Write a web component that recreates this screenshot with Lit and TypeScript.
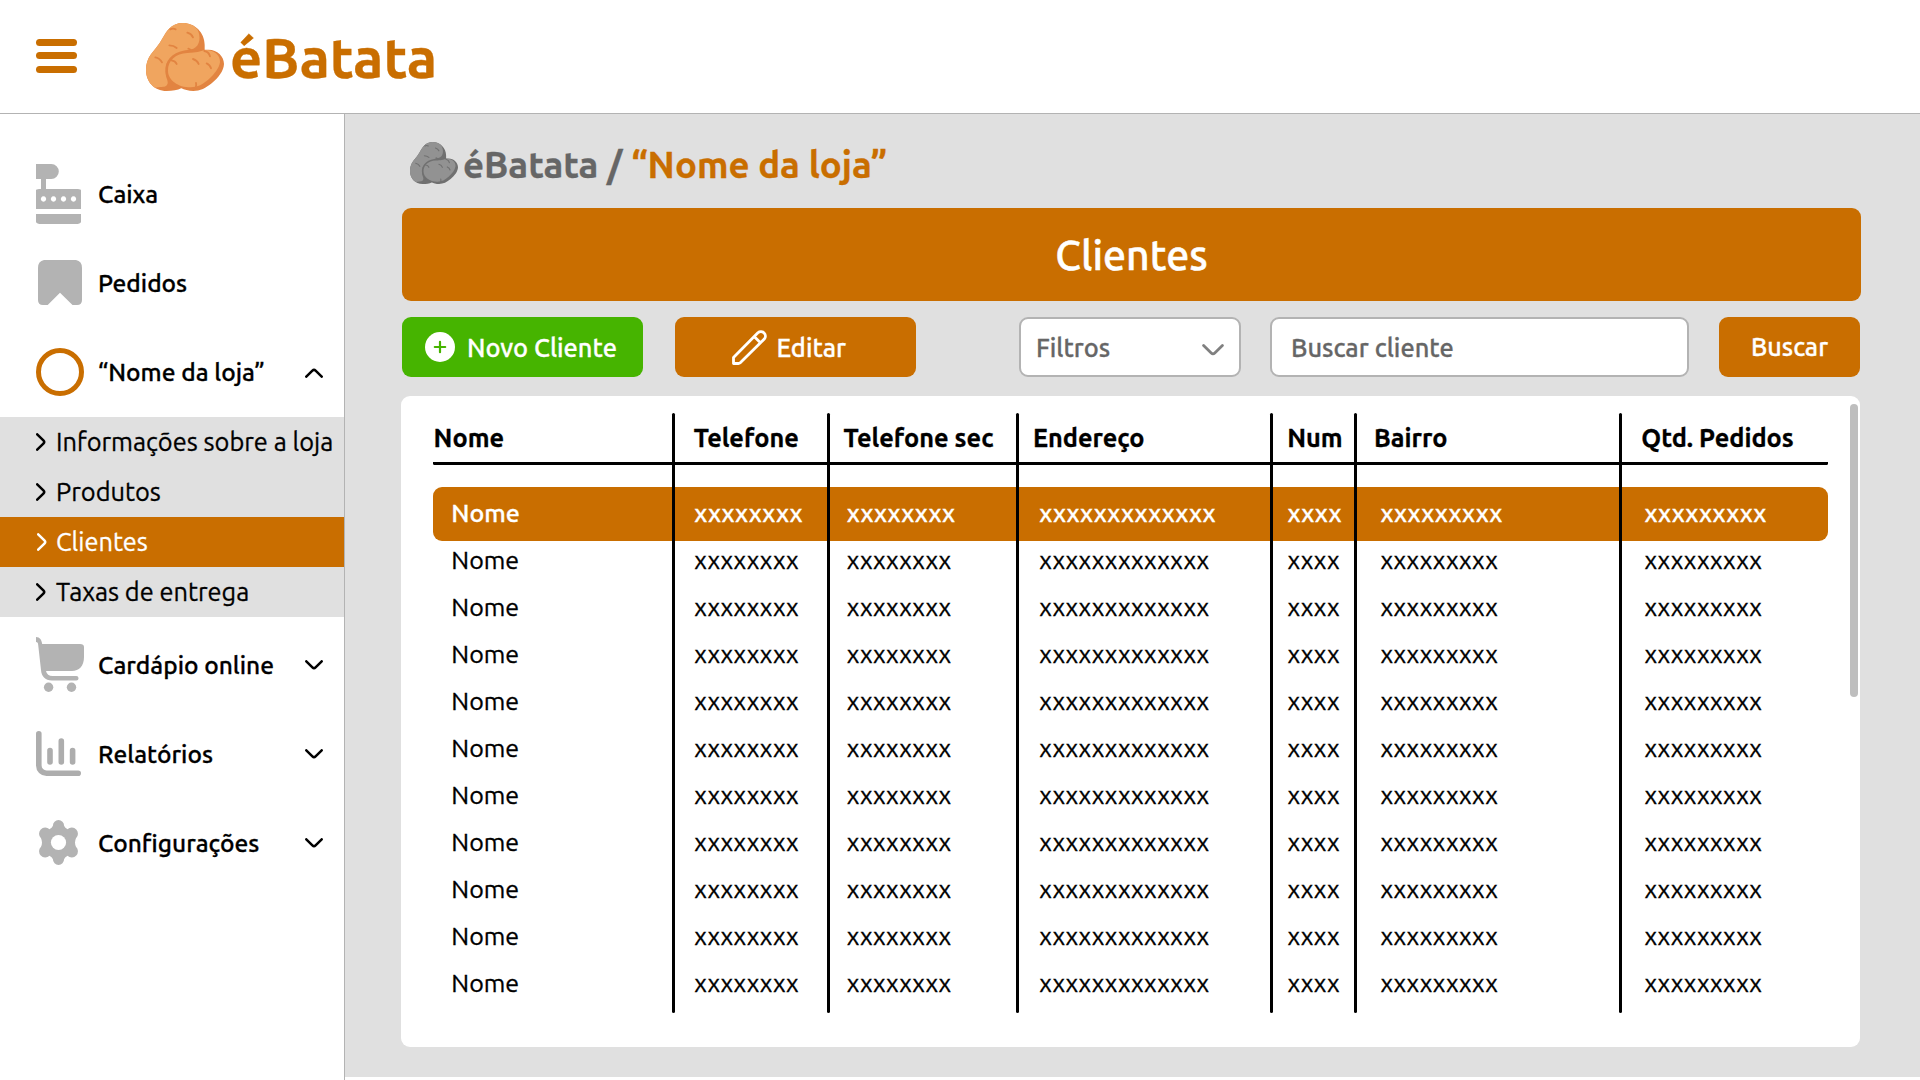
import { LitElement, html, css } from "lit";
import { classMap } from "lit/directives/class-map.js";

const potato = html`<svg viewBox="438 69 234 204" preserveAspectRatio="none">
  <path class="dark" d="M548 69C585 69 614 98 614 135V152L545 264C532 271 518 273 500 273C462 273 438 245 438 210C438 172 460 156 474 136C489 115 494 100 507 86C518 75 532 69 548 69Z"/>
  <path class="light" d="M548 69C567 69 583 76 592 88C603 108 601 138 580 146L560 152L500 190L497 222C499 238 509 249 499 257C493 262 478 260 466 263C449 253 438 233 438 210C438 172 460 156 474 136C489 115 494 100 507 86C518 75 532 69 548 69Z"/>
  <path class="dark" d="M626 149C652 149 672 169 672 192C671 214 654 234 636 249C618 264 600 273 580 273C565 273 553 269 543 264C515 255 500 240 496 215C494 187 512 158 556 151C588 146 600 150 626 149Z"/>
  <path class="light" d="M614 150C642 149 661 164 660 187C657 205 644 222 626 238C609 253 593 262 572 262C534 262 504 240 504 212C503 182 528 160 562 159C590 158 600 155 614 150Z"/>
  <g class="marks"><path d="M511 88Q519 84 527 88M562 98Q574 101 579 112M508 136Q521 136 530 144M466 172Q480 175 486 187M565 146Q572 148 576 154M514 181Q526 182 530 192M579 177Q592 181 596 192M613 153Q627 156 630 169M620 190Q630 194 633 205M588 249Q590 256 587 263"/></g>
</svg>`;

const chevron = html`<svg class="chev" width="18" height="10" viewBox="0 0 18 10"><path d="M1.3 1.3L7.4 7.4Q9 9 10.6 7.4L16.7 1.3" fill="none" stroke="currentColor" stroke-width="2.5" stroke-linecap="round"/></svg>`;
const arrow = html`<svg class="arrow" width="10" height="18" viewBox="0 0 10 18"><path d="M1.2 1.3L7.4 7.4Q9 9 7.4 10.6L1.2 16.7" fill="none" stroke="currentColor" stroke-width="2.5" stroke-linecap="round"/></svg>`;

const icons = {
  caixa: html`<svg width="45" height="60" viewBox="0 0 45 60"><path fill-rule="evenodd" d="M0 0H15.3a7.5 7.5 0 0 1 0 15H10V25H42Q45 25 45 26.5V45H0V26.5Q0 25 3 25H5V15H0ZM7.5 32.3a2.7 2.7 0 1 0 .01 0ZM17.5 32.3a2.7 2.7 0 1 0 .01 0ZM27.5 32.3a2.7 2.7 0 1 0 .01 0ZM37.5 32.3a2.7 2.7 0 1 0 .01 0ZM0 50H45V58Q44 60 40 60H5Q1 60 0 58Z"/></svg>`,
  pedidos: html`<svg class="inset" width="44" height="45" viewBox="0 0 44 45"><path d="M6 0H38Q44 1 44 8V40Q44 45 39 45H34.5L22 32.7L9.7 45H5Q0 45 0 40V8Q0 1 6 0Z"/></svg>`,
  loja: html`<svg width="48" height="48" viewBox="0 0 48 48"><circle class="ring" cx="24" cy="24" r="21.5"/></svg>`,
  cart: html`<svg width="48" height="55" viewBox="0 0 48 55"><path d="M0 0C4 0 5.6 3 6.2 7H44Q48 7 48 10V20C48 29 43 34 36 34H10C10.6 37 13 39 16.5 39H40.3a2.2 2.2 0 0 1 0 4.5H16C9 43.5 5.4 39 5 33L2.2 8C2 5.8 1.6 5 0 5Z"/><circle cx="12.6" cy="50.3" r="4.7"/><circle cx="35.5" cy="50.3" r="4.7"/></svg>`,
  chart: html`<svg width="45" height="45" viewBox="0 0 45 45"><path class="line" d="M2.8 2.8V34.5a7.7 7.7 0 0 0 7.7 7.7H42.2M14 19.6V31M25.3 10V31M36.6 19.6V31"/></svg>`,
  gear: html`<svg class="inset" width="41" height="45" viewBox="0 0 41 45"><path d="M14.9 5.7a5.6 5.6 0 0 1 11.2 0Q26.5 7.6 29.5 9.2A5.6 5.6 0 1 1 38 18.2Q36 22.5 38 26.8A5.6 5.6 0 1 1 29.5 35.8Q26.5 37.4 26.1 39.3a5.6 5.6 0 0 1-11.2 0Q14.5 37.4 11.5 35.8A5.6 5.6 0 1 1 3 26.8Q5 22.5 3 18.2A5.6 5.6 0 1 1 11.5 9.2Q14.5 7.6 14.9 5.7Z"/><circle cx="20.5" cy="22.5" r="7.6" fill="#fff"/></svg>`,
};

const topItems = [
  { icon: icons.caixa, label: "Caixa" },
  { icon: icons.pedidos, label: "Pedidos" },
  { icon: icons.loja, label: "“Nome da loja”", open: true },
];
const bottomItems = [
  { icon: icons.cart, label: "Cardápio online" },
  { icon: icons.chart, label: "Relatórios" },
  { icon: icons.gear, label: "Configurações" },
];
const subItems = ["Informações sobre a loja", "Produtos", "Clientes", "Taxas de entrega"];
const heads = ["Nome", "Telefone", "Telefone sec", "Endereço", "Num", "Bairro", "Qtd. Pedidos"];
const record = ["Nome", "x".repeat(8), "x".repeat(8), "x".repeat(13), "x".repeat(4), "x".repeat(9), "x".repeat(9)];
const rows = Array.from({ length: 11 }, () => record);

class AppRoot extends LitElement {
  static styles = css`
    :host { display: flex; flex-direction: column; height: 1080px; overflow: hidden; background: #fff; color: #000; font-family: "Ubuntu", "Noto Sans", sans-serif; -webkit-text-stroke: 0.3px currentColor; --orange: #c96e00; --gray: #b3b3b3; --bg: #e0e0e0; }
    * { box-sizing: border-box; }
    svg { display: block; flex: none; }
    header { height: 114px; flex: none; border-bottom: 1px solid var(--gray); display: flex; align-items: center; padding-left: 36px; }
    .burger { display: flex; flex-direction: column; gap: 6.5px; width: 41px; margin: -1.5px 69px 0 0; }
    .burger i { height: 7px; border-radius: 3.5px; background: var(--orange); }
    .brand { display: flex; align-items: center; color: var(--orange); font-size: 56px; font-weight: 700; gap: 6px; --light: #f0a55f; --dark: #e28441; }
    .brand svg { width: 78px; height: 68px; }
    .brand span { line-height: 64px; margin-top: 3px; }
    .light { fill: var(--light); }
    .dark { fill: var(--dark); }
    .marks { fill: none; stroke: var(--dark); stroke-width: 5.5; stroke-linecap: round; }
    .body { flex: 1; display: flex; min-height: 0; }
    nav { width: 345px; flex: none; border-right: 1px solid var(--gray); padding-top: 35px; }
    .item { height: 89px; display: flex; align-items: center; padding: 0 21px 0 36px; font-size: 24.5px; font-weight: 500; }
    .pic { width: 62px; fill: var(--gray); }
    .inset { margin-left: 2px; }
    .ring { fill: none; stroke: var(--orange); stroke-width: 5; }
    .line { fill: none; stroke: #adadad; stroke-width: 5.6; stroke-linecap: round; }
    .item .chev { margin-left: auto; }
    .item.open .chev { transform: rotate(180deg); margin-top: 3px; }
    .sub { background: var(--bg); margin: 1px 0 3px; }
    .sub div { height: 50px; display: flex; align-items: center; padding-left: 36px; gap: 10px; font-size: 25.4px; white-space: nowrap; }
    .sub span { padding-bottom: 1px; }
    .sub .on { background: var(--orange); color: #fff; padding-left: 37px; gap: 9px; }
    main { flex: 1; height: 963px; background: var(--bg); padding: 25px 59px 0 57px; }
    .crumb { display: flex; align-items: center; height: 54px; padding-left: 8px; font-size: 36.6px; font-weight: 700; color: #666; --light: #929292; --dark: #707070; }
    .crumb svg { width: 48px; height: 42px; margin: -6px 5px 0 0; }
    .crumb span { margin-top: -4px; white-space: pre; }
    .crumb .shop { color: var(--orange); padding-left: 0.5px; }
    .banner { height: 93px; margin-top: 15px; border-radius: 9px; background: var(--orange); color: #fff; font-size: 41px; font-weight: 500; display: flex; align-items: center; justify-content: center; -webkit-text-stroke-width: 0.5px; }
    .tools { display: flex; height: 60px; margin: 16px 1px 0 0; font-size: 25.4px; font-weight: 500; color: #fff; }
    .tools > div { display: flex; align-items: center; border-radius: 9px; background: var(--orange); white-space: nowrap; }
    .tools .new { width: 241px; background: #46b400; padding-left: 23px; gap: 12px; margin-right: 32px; }
    .tools .edit { width: 241px; padding-left: 57px; gap: 9.5px; margin-right: 103px; }
    .tools .field { background: #fff; border: 2px solid var(--gray); color: #666; }
    .tools .filter { width: 222px; padding: 0 15px 0 15px; justify-content: space-between; margin-right: 29px; }
    .filter svg { margin-top: 5px; color: #808080; }
    .tools .search { width: 419px; padding-left: 19px; margin-right: 30px; }
    .tools .go { width: 141px; justify-content: center; font-size: 25.2px; }
    .card { position: relative; height: 651px; margin: 19px 1px 0 -1px; border-radius: 9px; background: #fff; padding: 17px 32px; font-size: 25px; }
    .grid { display: grid; grid-template-columns: 239px 155px 189px 254px 84px 265px 209px; white-space: nowrap; }
    .head { height: 52px; border-bottom: 3px solid #000; font-weight: 700; font-size: 25.3px; align-items: center; border-radius: 1.5px; }
    .head span:nth-child(1) { padding-left: 0.6px; }
    .head span:nth-child(2) { padding-left: 21.7px; }
    .head span:nth-child(3) { padding-left: 16.5px; }
    .head span:nth-child(4) { padding-left: 17px; }
    .head span:nth-child(5) { padding-left: 17.2px; }
    .head span:nth-child(6) { padding-left: 20px; }
    .head span:nth-child(7) { padding-left: 22.3px; }
    .rows { padding-top: 24px; }
    .row { height: 47px; align-items: center; }
    .row.sel { height: 54px; margin: -2px 0 -5px; padding-bottom: 2px; border-radius: 9px; background: var(--orange); color: #fff; font-weight: 500; }
    .row span:nth-child(1) { padding-left: 18.3px; }
    .row span:nth-child(2) { padding-left: 22.3px; }
    .row span:nth-child(3) { padding-left: 19.8px; }
    .row span:nth-child(4) { padding-left: 23.3px; }
    .row span:nth-child(5) { padding-left: 17.6px; }
    .row span:nth-child(6) { padding-left: 26.4px; }
    .row span:nth-child(7) { padding-left: 25.5px; }
    .rules { position: absolute; left: 32px; top: 17px; height: 600px; }
    .rules i { width: 3px; border-radius: 1.5px; background: #000; }
    .rules i:first-child { visibility: hidden; }
    .thumb { position: absolute; right: 2px; top: 8px; width: 8px; height: 293px; border-radius: 4px; background: #bebebe; }
  `;

  item(it: { icon: unknown; label: string; open?: boolean }, expandable: boolean) {
    return html`<div class=${classMap({ item: true, open: !!it.open })}>
      <div class="pic">${it.icon}</div><span>${it.label}</span>${expandable ? chevron : ""}
    </div>`;
  }

  render() {
    return html`
      <header>
        <div class="burger"><i></i><i></i><i></i></div>
        <div class="brand">${potato}<span>éBatata</span></div>
      </header>
      <div class="body">
        <nav>
          ${topItems.map((it) => this.item(it, !!it.open))}
          <div class="sub">
            ${subItems.map((s) => html`<div class=${classMap({ on: s === "Clientes" })}>${arrow}<span>${s}</span></div>`)}
          </div>
          ${bottomItems.map((it) => this.item(it, true))}
        </nav>
        <main>
          <div class="crumb">${potato}<span>éBatata / </span><span class="shop">“Nome da loja”</span></div>
          <div class="banner">Clientes</div>
          <div class="tools">
            <div class="new">
              <svg width="30" height="30" viewBox="0 0 30 30"><circle cx="15" cy="15" r="15" fill="#fff"/><path d="M15 9.8V20.2M9.8 15H20.2" stroke="#46b400" stroke-width="2.2" stroke-linecap="round"/></svg>
              <span>Novo Cliente</span>
            </div>
            <div class="edit">
              <svg width="35" height="35" viewBox="0 0 35 35"><path d="M1.5 33.5V27.4L25.9 2.8a4.5 4.5 0 0 1 6.4 6.3L8 33Q7.4 33.5 6.5 33.5ZM22.4 6.8L28.2 12.6" fill="none" stroke="#fff" stroke-width="2.8" stroke-linejoin="round"/></svg>
              <span>Editar</span>
            </div>
            <div class="field filter"><span>Filtros</span>
              <svg width="22" height="12" viewBox="0 0 22 12"><path d="M1.6 1.6L9.2 9Q11 10.7 12.8 9L20.4 1.6" fill="none" stroke="currentColor" stroke-width="2.8" stroke-linecap="round"/></svg>
            </div>
            <div class="field search"><span>Buscar cliente</span></div>
            <div class="go"><span>Buscar</span></div>
          </div>
          <div class="card">
            <div class="grid head">${heads.map((h) => html`<span>${h}</span>`)}</div>
            <div class="rows">
              ${rows.map((r, i) => html`<div class=${classMap({ grid: true, row: true, sel: i === 0 })}>${r.map((c) => html`<span>${c}</span>`)}</div>`)}
            </div>
            <div class="grid rules">${heads.map(() => html`<i></i>`)}</div>
            <div class="thumb"></div>
          </div>
        </main>
      </div>
    `;
  }
}
customElements.define("app-root", AppRoot);
